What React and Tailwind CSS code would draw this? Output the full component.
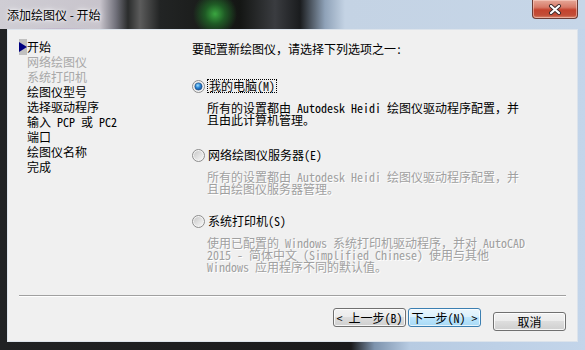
const cjk = "font-['Noto_Sans_Mono_CJK_SC','Noto_Sans_CJK_SC',monospace]";

const steps = [
  { label: "开始", active: true },
  { label: "网络绘图仪", disabled: true },
  { label: "系统打印机", disabled: true },
  { label: "绘图仪型号" },
  { label: "选择驱动程序" },
  { label: "输入 PCP 或 PC2" },
  { label: "端口" },
  { label: "绘图仪名称" },
  { label: "完成" },
];

function Radio({ checked, id }) {
  return (
    <svg width="13" height="13" viewBox="0 0 13 13" className="shrink-0">
      <defs>
        <linearGradient id={`ring-${id}`} x1="0" y1="0" x2="1" y2="1">
          <stop offset="0" stopColor="#c9c9c9" />
          <stop offset="1" stopColor="#f7f7f7" />
        </linearGradient>
        <radialGradient id={`dot-${id}`} cx="0.4" cy="0.35" r="0.75">
          <stop offset="0" stopColor="#9fe0ff" />
          <stop offset="0.45" stopColor="#2b86d6" />
          <stop offset="1" stopColor="#0d3f84" />
        </radialGradient>
      </defs>
      <circle cx="6.5" cy="6.5" r="6" fill="#f4f4f4" stroke="#8c8c8c" />
      <circle cx="6.5" cy="6.5" r="4.6" fill={`url(#ring-${id})`} />
      {checked && <circle cx="6.5" cy="6.5" r="3.6" fill={`url(#dot-${id})`} stroke="#1f4d85" strokeWidth="0.6" />}
    </svg>
  );
}

function Button({ children, primary }) {
  return (
    <button
      type="button"
      className={
        primary
          ? "h-[19px] w-[73px] rounded-[3px] border border-[#3c7fb1] bg-[linear-gradient(#eaf6fd_0%,#d9f0fc_50%,#bee6fd_50%,#a7d9f5_100%)] text-[12px] leading-[17px] text-black shadow-[inset_0_0_0_1px_rgba(255,255,255,0.7)]"
          : "h-[19px] w-[73px] rounded-[3px] border border-[#707070] bg-[linear-gradient(#f2f2f2_0%,#ebebeb_50%,#dddddd_50%,#cfcfcf_100%)] text-[12px] leading-[17px] text-black shadow-[inset_0_0_0_1px_rgba(255,255,255,0.8)]"
      }
    >
      {children}
    </button>
  );
}

export default function App() {
  return (
    <div className={`relative flex h-[350px] w-[585px] flex-col overflow-hidden bg-[linear-gradient(to_right,#202224_0%,#1a1a1c_60%,#7d93ad_64%,#b7cbe2_70%,#c3d5ea_100%)] ${cjk}`}>
      <div className="flex h-[29px] items-start justify-between bg-[radial-gradient(circle_at_215px_14px,#3aa640_0px,#1f5a25_10px,transparent_22px),radial-gradient(ellipse_at_60px_30px,#b49cc4_0px,transparent_40px),linear-gradient(to_right,#cfcdd4_0px,#c8c4cc_100px,#70707a_116px,#2a2c2c_128px,#5c5c5c_140px,#222424_160px,#141614_240px,#3a3c40_275px,#1a1c1e_300px,#8fa2b8_325px,#c4d3e4_345px,#c6d6e8_585px)]">
        <div className="pl-[7px] pt-[7px] font-['Noto_Sans_CJK_SC',sans-serif] text-[12px] leading-[16px] text-black [text-shadow:0_0_6px_#fff,0_0_3px_#fff]">
          添加绘图仪 - 开始
        </div>
        <div className="mr-[7px] flex h-[19px] w-[46px] items-center justify-center rounded-b-[4px] border border-t-0 border-[#6b3c36] bg-[linear-gradient(#e6a898_0%,#d77a68_40%,#c4432e_55%,#c24e38_85%,#d98a70_100%)] shadow-[inset_0_0_0_1px_rgba(255,220,210,0.5)]">
          <svg width="14" height="11" viewBox="0 0 14 11">
            <path d="M3 2 L11 9 M11 2 L3 9" stroke="#3b2a2a" strokeWidth="4" strokeLinecap="round" />
            <path d="M3 2 L11 9 M11 2 L3 9" stroke="#ffffff" strokeWidth="2.2" strokeLinecap="round" />
          </svg>
        </div>
      </div>

      <div className="mx-[7px] flex h-[313px] flex-col border border-[#dce3eb] bg-[#f0f0f0]">
        <div className="flex flex-1">
          <div className="w-[184px] pl-[11px] pt-[9px]">
            {steps.map((s) => (
              <div key={s.label} className="flex h-[15px] items-center">
                <div className={`flex h-[16px] w-[8px] items-center ${s.active ? "bg-[#c0c0c0]" : ""}`}>
                  {s.active && (
                    <svg width="8" height="10" viewBox="0 0 8 10">
                      <path d="M0 0 L8 5 L0 10 Z" fill="#000080" />
                    </svg>
                  )}
                </div>
                <span className={`whitespace-pre text-[12px] leading-[15px] ${s.disabled ? "text-[#a8a8a8]" : "text-black"}`}>
                  {s.label}
                </span>
              </div>
            ))}
          </div>

          <div className="flex flex-col pt-[11px] text-[12px] text-black">
            <div className="h-[15px] leading-[15px]">要配置新绘图仪，请选择下列选项之一:</div>

            <div className="mt-[23px] flex h-[14px] items-center gap-[2px]">
              <Radio checked id="a" />
              <span className="border border-dotted border-black px-[1px] leading-[12px]">我的电脑(M)</span>
            </div>
            <div className="ml-[15px] mt-[9px] whitespace-pre leading-[12px]">
              <div>所有的设置都由 Autodesk Heidi 绘图仪驱动程序配置，并</div>
              <div>且由此计算机管理。</div>
            </div>

            <div className="mt-[22px] flex h-[14px] items-center gap-[3px]">
              <Radio id="b" />
              <span className="leading-[12px]">网络绘图仪服务器(E)</span>
            </div>
            <div className="ml-[15px] mt-[9px] whitespace-pre leading-[12px] text-[#a0a0a0] [text-shadow:1px_1px_0_#fff]">
              <div>所有的设置都由 Autodesk Heidi 绘图仪驱动程序配置，并</div>
              <div>且由绘图仪服务器管理。</div>
            </div>

            <div className="mt-[19px] flex h-[14px] items-center gap-[3px]">
              <Radio id="c" />
              <span className="leading-[12px]">系统打印机(S)</span>
            </div>
            <div className="ml-[15px] mt-[9px] whitespace-pre leading-[12px] text-[#a0a0a0] [text-shadow:1px_1px_0_#fff]">
              <div>使用已配置的 Windows 系统打印机驱动程序，并对 AutoCAD</div>
              <div>2015 - 简体中文 (Simplified Chinese) 使用与其他</div>
              <div>Windows 应用程序不同的默认值。</div>
            </div>
          </div>
        </div>

        <div className="mx-[11px] h-[2px] border-t border-[#a0a0a0] bg-white" />
        <div className="flex justify-end pb-[9px] pr-[11px] pt-[11px]">
          <div className="flex gap-[2px]">
            <Button>&lt; 上一步(B)</Button>
            <Button primary>下一步(N) &gt;</Button>
          </div>
          <div className="ml-[12px]">
            <Button>取消</Button>
          </div>
        </div>
      </div>
      <div className="flex-1" />
    </div>
  );
}
